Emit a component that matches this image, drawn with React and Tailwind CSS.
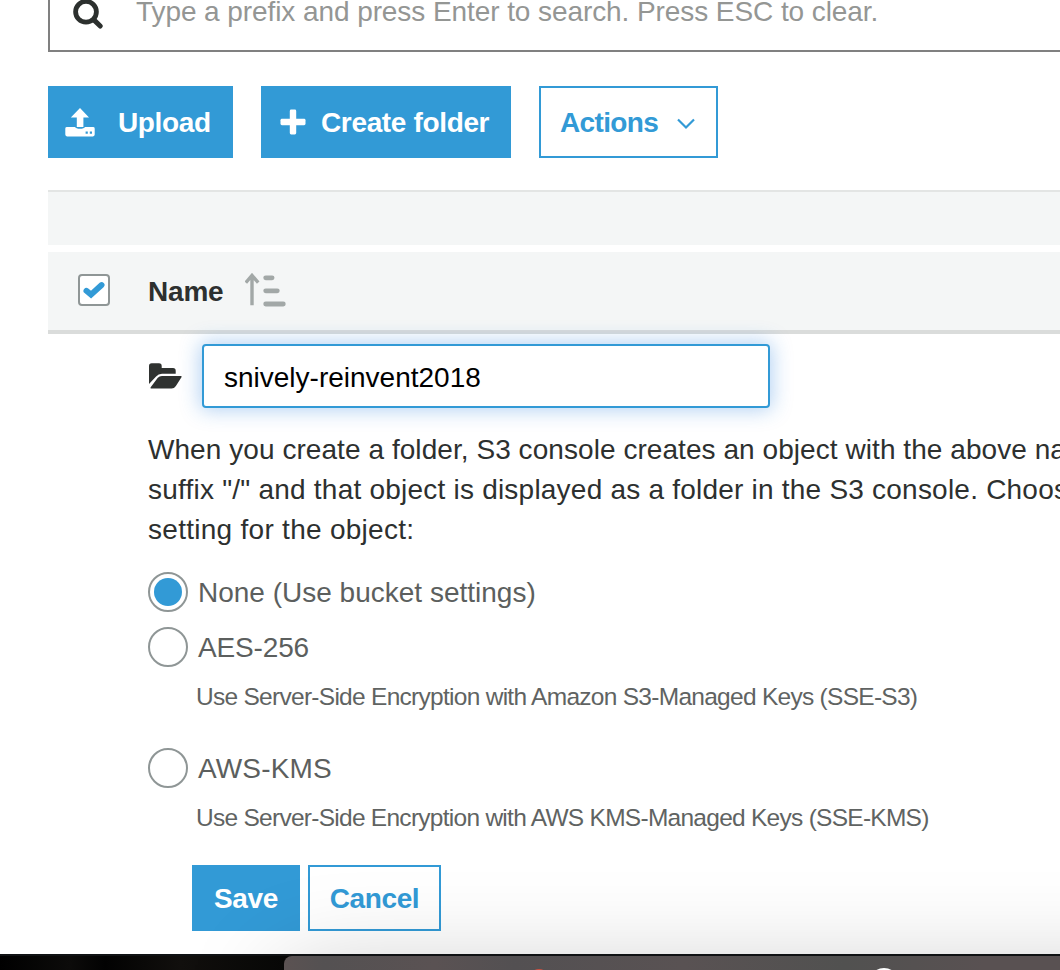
function SearchIcon() {
  return (
    <svg className="block h-8 w-8" viewBox="0 0 32 32" fill="none" stroke="#2c302e" strokeLinecap="round">
      <circle cx="14" cy="14.8" r="10.4" strokeWidth="4.8" />
      <path d="M22.4 23.4l5.8 5.6" strokeWidth="5" />
    </svg>
  );
}

function UploadIcon() {
  return (
    <svg className="block h-[30px] w-[30px]" viewBox="0 0 30 30" fill="#fff">
      <path d="M15 1 24 10.6H18.4V20H11.8V10.6H5.8Z" />
      <path fillRule="evenodd" d="M2 20H10Q11 21.8 15 21.8T20 20H28Q29.7 20 29.7 21.4V27.6Q29.7 29.4 28 29.4H2Q.3 29.4 .3 27.6V21.4Q.3 20 2 20ZM20.6 24.6V26.8H22.8V24.6ZM24.8 24.6V26.8H27V24.6Z" />
    </svg>
  );
}

function SortIcon() {
  return (
    <svg className="block h-[34px] w-[42px]" viewBox="0 0 42 34" fill="none" stroke="#a2a8a7" strokeLinecap="round">
      <path d="M7 32.2V2.6M.8 9.6 7 2.4 13.2 9.6" strokeWidth="3.4" strokeLinecap="butt" />
      <path d="M20.7 4.8H27.1M20.7 17.8H32.3M20.7 31H38.3" strokeWidth="4.8" />
    </svg>
  );
}

function FolderIcon() {
  return (
    <svg className="block h-[26px] w-[34px]" viewBox="0 0 34 26" fill="#2f3230">
      <path d="M1 21V3Q1 .3 3.7.3H11Q13.7.3 13.7 3V5H25Q27.7 5 27.7 7.8V10.8H14Q10.3 10.8 8.1 13.4Z" />
      <path d="M2.7 24.3 9.8 14.8Q11.3 12.9 14 12.9H32.6Q34.4 12.9 33.3 14.6L27.9 23Q26.2 25.6 23.6 25.6H3.5Q2.1 25.6 2.7 24.3Z" />
    </svg>
  );
}

function Radio({ checked }) {
  return (
    <span className="flex size-10 shrink-0 items-center justify-center rounded-full border-2 border-[#8f9696] bg-white">
      {checked && <span className="size-7 rounded-full bg-[#329ad6]" />}
    </span>
  );
}

export default function App() {
  return (
    <div className="flex h-[970px] w-[1060px] flex-col overflow-hidden bg-white font-['Liberation_Sans',Arial,sans-serif] text-[28px] text-[#2d302f]">
      <div className="ml-12 flex h-[52px] shrink-0 border-b-2 border-l-2 border-[#808080] pl-[22px]">
        <div className="-mt-[3px]"><SearchIcon /></div>
        <span className="ml-8 whitespace-nowrap leading-6 tracking-[-0.08px] text-[#949694]">Type a prefix and press Enter to search. Press ESC to clear.</span>
      </div>

      <div className="ml-12 mt-[34px] flex h-[72px] shrink-0 gap-7 font-bold">
        <button className="flex w-[185px] items-center bg-[#329ad6] pl-[17px] text-white">
          <UploadIcon />
          <span className="ml-[23px] pt-0.5 tracking-[-0.35px]">Upload</span>
        </button>
        <button className="flex w-[250px] items-center whitespace-nowrap bg-[#329ad6] pl-[19px] text-white">
          <svg className="block size-[26px] shrink-0" viewBox="0 0 26 26" fill="#fff"><rect x="9.8" y=".5" width="6.4" height="25" rx="1.4" /><rect x=".5" y="9.8" width="25" height="6.4" rx="1.4" /></svg>
          <span className="ml-[15px] pt-0.5 tracking-[-0.35px]">Create folder</span>
        </button>
        <button className="flex w-[179px] items-center border-2 border-[#329ad6] bg-white pl-[19px] text-[#329ad6]">
          <span className="pt-0.5 tracking-[-0.65px]">Actions</span>
          <svg className="ml-[19px] mt-1 block h-3 w-[18px]" viewBox="0 0 18 12" fill="none" stroke="#329ad6" strokeWidth="2.2"><path d="M1 1.5 9 9.5 17 1.5" /></svg>
        </button>
      </div>

      <div className="ml-12 mt-8 h-[55px] shrink-0 border-t-2 border-[#e3e5e4] bg-[#f4f6f6]" />
      <div className="ml-12 mt-[7px] flex h-[82px] shrink-0 items-center border-b-4 border-[#dadcdb] bg-[#f4f6f6] pl-[30px]">
        <span className="mb-0.5 flex size-8 items-center justify-center rounded border-2 border-[#8f9696] bg-white">
          <svg className="block h-[22px] w-6" viewBox="0 0 24 22" fill="none" stroke="#329ad6" strokeWidth="5.8" strokeLinecap="round"><path d="M4.4 11.8 9 15.6 19.6 6" strokeLinejoin="miter" /></svg>
        </span>
        <span className="ml-[38px] pt-0.5 font-bold tracking-[-0.2px]">Name</span>
        <span className="mb-0.5 ml-[22px]"><SortIcon /></span>
      </div>

      <div className="flex min-h-0 flex-1 flex-col pl-[148px]">
        <div className="mt-2.5 flex h-16 shrink-0 items-center">
          <FolderIcon />
          <input
            className="ml-5 h-16 w-[568px] rounded border-2 border-[#329ad6] bg-white px-5 pt-[3px] text-[28px] text-black shadow-[0_0_20px_2px_rgba(30,120,220,0.34)] outline-none"
            defaultValue="snively-reinvent2018"
          />
        </div>
        <p className="mt-[22px] whitespace-nowrap leading-10">
          <span className="block tracking-[0.06px]">When you create a folder, S3 console creates an object with the above name plus</span>
          <span className="block tracking-[0.22px]">suffix "/" and that object is displayed as a folder in the S3 console. Choose the encryption</span>
          <span className="block tracking-[0.28px]">setting for the object:</span>
        </p>
        <div className="mt-[22px] flex h-10 shrink-0 items-center gap-2.5 text-[#5c5f5e]">
          <Radio checked />
          <span className="pt-0.5">None (Use bucket settings)</span>
        </div>
        <div className="mt-[15px] flex h-10 shrink-0 items-center gap-2.5 text-[#5c5f5e]">
          <Radio />
          <span className="pt-0.5 tracking-[-0.15px]">AES-256</span>
        </div>
        <div className="ml-12 mt-[13px] h-10 shrink-0 whitespace-nowrap text-[24.5px] leading-[34px] tracking-[-0.72px] text-[#606362]">Use Server-Side Encryption with Amazon S3-Managed Keys (SSE-S3)</div>
        <div className="mt-7 flex h-10 shrink-0 items-center gap-2.5 text-[#5c5f5e]">
          <Radio />
          <span className="pt-0.5 tracking-[0.15px]">AWS-KMS</span>
        </div>
        <div className="ml-12 mt-[13px] h-10 shrink-0 whitespace-nowrap text-[24.5px] leading-[34px] tracking-[-0.73px] text-[#606362]">Use Server-Side Encryption with AWS KMS-Managed Keys (SSE-KMS)</div>
        <div className="ml-11 mt-6 flex h-[66px] shrink-0 gap-2 font-bold">
          <button className="w-[108px] bg-[#329ad6] pt-0.5 tracking-[-0.3px] text-white">Save</button>
          <button className="w-[133px] border-2 border-[#329ad6] pt-0.5 tracking-[-0.4px] text-[#329ad6]">Cancel</button>
        </div>
      </div>

      <div className="relative flex h-4 shrink-0 bg-[linear-gradient(90deg,#000,#0c0b0a_70px,#020202_105px,#110f0d_180px,#080807_284px)]">
        <div className="pointer-events-none relative ml-[284px] mt-0.5 h-[120px] w-[1200px] shrink-0 rounded-tl-lg bg-[linear-gradient(90deg,#5b5252,#545152_40px,#5a5253_150px,#535052_230px,#595253_400px,#515150_560px,#595152_700px)] shadow-[0_16px_100px_rgba(0,0,0,0.22)]">
          <div className="absolute left-[245px] top-[13px] size-5 rounded-full bg-[#d05040]" />
          <div className="absolute left-[585px] top-3 size-[30px] rounded-full bg-white" />
        </div>
        <div className="absolute left-0 top-0 h-0.5 w-full bg-[#101214]" />
      </div>
    </div>
  );
}
